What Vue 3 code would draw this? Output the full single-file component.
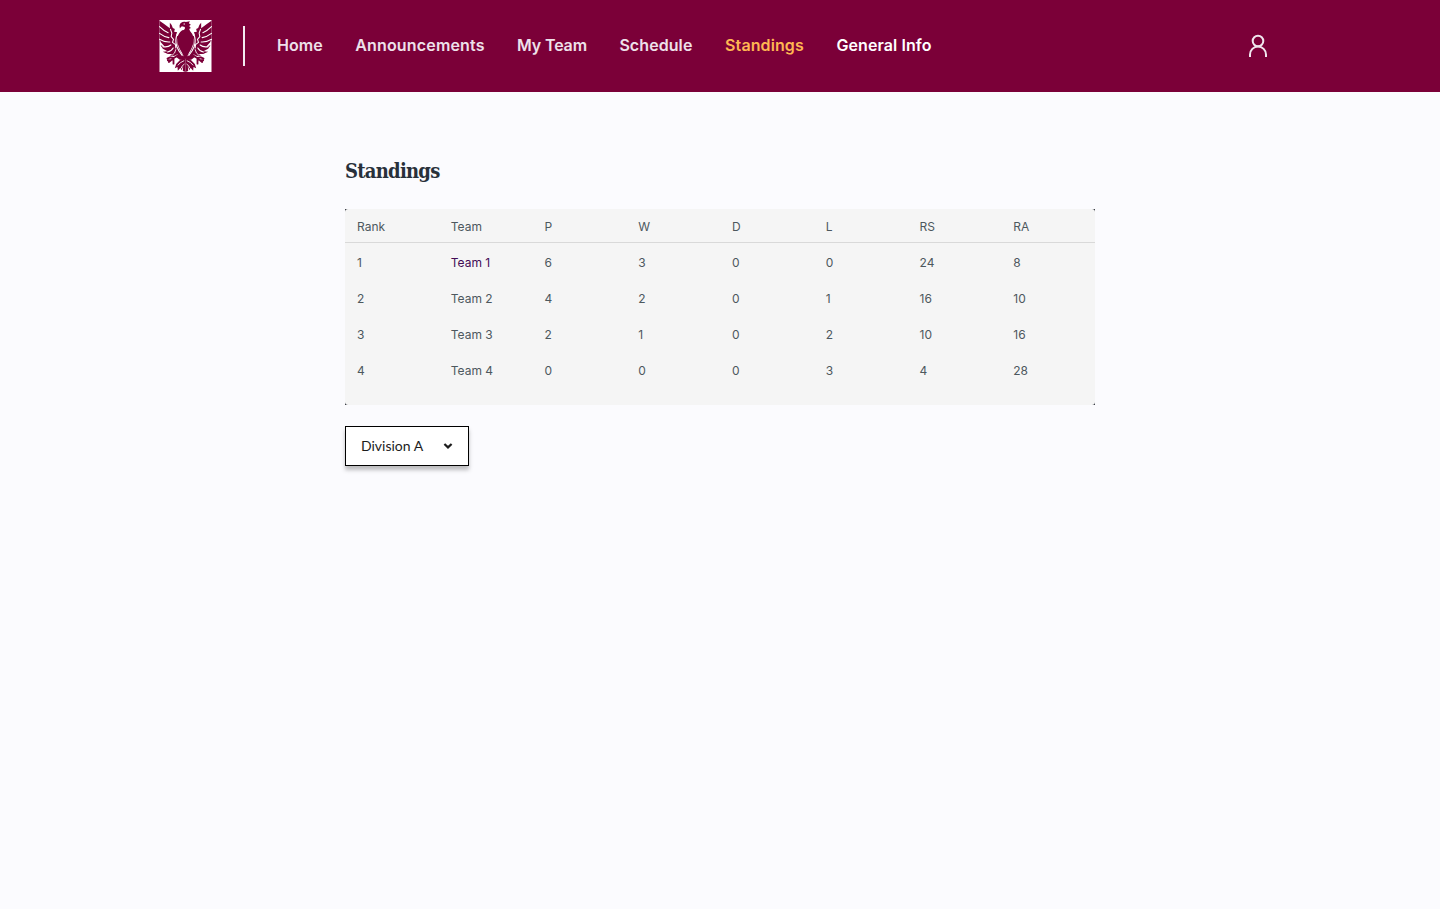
<script setup>
const links = [
  { label: 'Home', cls: 'home' },
  { label: 'Announcements', cls: 'news' },
  { label: 'My Team', cls: 'team' },
  { label: 'Schedule', cls: 'schedule' },
  { label: 'Standings', cls: 'active' },
  { label: 'General Info', cls: 'info' },
]
const columns = ['Rank', 'Team', 'P', 'W', 'D', 'L', 'RS', 'RA']
const rows = [
  [1, 'Team 1', 6, 3, 0, 0, 24, 8],
  [2, 'Team 2', 4, 2, 0, 1, 16, 10],
  [3, 'Team 3', 2, 1, 0, 2, 10, 16],
  [4, 'Team 4', 0, 0, 0, 3, 4, 28],
]
</script>

<template>
  <div class="page">
    <header class="bar">
      <svg class="logo" viewBox="0 0 156 156" aria-label="Eagle crest">
        <rect width="156" height="156" fill="#fff" />
        <defs>
          <g id="half">
            <path fill="#7b0038" d="M0 2 L14 12 L31 25 L31 8 L36 14 L40 24 L46 27 L44 35 L53 37 L50 46 L58 50 L54 58 L54 76 L64 98 L74 110 L76 120 L61 119 L49 110 L56 101 L46 107 L31 109 L38 102 L25 102 L10 95 L24 94 L10 86 L3 76 L16 80 L4 67 L0 56 Z" />
            <g fill="none" stroke="#fff" stroke-width="3.4" stroke-linecap="round">
              <path d="M0 20 Q13 33 26 38" />
              <path d="M0 40 Q13 50 28 53" />
              <path d="M0 58 Q14 67 31 66" />
              <path d="M10 80 Q25 83 34 75" />
              <path d="M24 96 Q36 94 41 84" />
              <path d="M37 107 Q48 100 49 89" stroke-width="2.6" />
              <path d="M33 28 L37 39 L35 50 L42 58 L39 67 L48 74 L49 84" stroke-width="3.2" />
              <path d="M54 40 Q45 62 52 80 Q57 94 68 106" stroke-width="3.4" />
            </g>
            <g fill="none" stroke="#7b0038" stroke-width="5.5" stroke-linecap="round" stroke-linejoin="round">
              <path d="M57 105 L43 114 L32 112 L24 116 M43 114 L28 126 M42 115 L42 131 M35 120 L25 121" />
            </g>
            <path fill="#7b0038" d="M78 113 L61 121 L50 132 L46 145 L54 141 L55 152 L63 143 L66 151 L71 139 L70 153 L78 156 Z" />
            <path fill="none" stroke="#fff" stroke-width="2.6" d="M74 122 Q61 127 55 136 M75 132 Q67 136 65 145" />
          </g>
        </defs>
        <use href="#half" />
        <use href="#half" transform="translate(156 0) scale(-1 1)" />
        <path fill="#7b0038" d="M68 31 C50 44 50 66 61 87 C66 97 72 103 74 116 L82 116 C84 103 90 97 95 87 C106 66 106 44 88 31 Z" />
        <path fill="#7b0038" d="M60 17 C62 7 70 4 79 6 L91 4 L88 10 L94 14 L89 18 L94 24 L89 27 L93 37 L64 37 L76 27 L76 21 L67 19 L61 25 Z" />
        <circle cx="74" cy="12" r="2" fill="#fff" />
      </svg>
      <span class="divider"></span>
      <nav class="nav">
        <a v-for="l in links" :key="l.label" :class="['link', l.cls]">{{ l.label }}</a>
      </nav>
      <svg class="user" viewBox="0 0 24 26" fill="none" stroke="#f0e6ee" stroke-width="2">
        <circle cx="12" cy="8" r="5.3" />
        <path d="M4 24 V21.5 a8 8 0 0 1 16 0 V24" />
      </svg>
    </header>
    <main class="main">
      <h1 class="title">Standings</h1>
      <div class="frame">
        <div class="table">
          <div class="row head">
            <span v-for="c in columns" :key="c">{{ c }}</span>
          </div>
          <div v-for="(r, i) in rows" :key="i" class="row">
            <span v-for="(v, j) in r" :key="j" :class="{ own: i === 0 && j === 1 }">{{ v }}</span>
          </div>
        </div>
      </div>
      <button class="select">
        <span>Division A</span>
        <svg class="chev" viewBox="0 0 10 8" fill="none" stroke="#1c1c1c" stroke-width="2.2"><path d="M1.4 2 L5 5.4 L8.6 2" /></svg>
      </button>
    </main>
  </div>
</template>

<style>
body { background: #fbfbfe; }
</style>

<style scoped>
.page { min-height: 909px; background: #fbfbfe; font-family: Inter, sans-serif; }
.bar { box-sizing: border-box; height: 92px; padding: 0 170px 0 159px; background: #7b0038; display: flex; align-items: center; }
.logo { width: 53px; height: 52px; flex: none; }
.divider { width: 2px; height: 40px; margin: 0 32px 0 31px; background: #f3eaf1; }
.nav { display: flex; gap: 32px; margin-right: auto; padding-bottom: 2px; }
.link { font: 600 16px/24px Inter, sans-serif; color: #eee1ea; white-space: nowrap; }
.home { width: 46.2px; letter-spacing: 0.05px; }
.news { width: 129.9px; letter-spacing: 0.17px; }
.team { width: 70.3px; letter-spacing: -0.15px; }
.schedule { width: 73.7px; letter-spacing: 0.08px; }
.active { width: 79.4px; letter-spacing: 0.1px; color: #ffb752; }
.info { width: 96px; letter-spacing: 0.08px; color: #fff; }
.user { width: 24px; height: 26px; }
.main { width: 750px; margin: 0 auto; padding-top: 65px; }
.title { margin: 0; font: 700 20px/28px "DejaVu Serif Condensed", "DejaVu Serif", serif; font-stretch: condensed; letter-spacing: -0.75px; color: #28303a; }
.frame { margin-top: 24px; background: #2c3038; }
.table { height: 196px; border-radius: 3px; background: #f5f5f5; }
.row { box-sizing: border-box; height: 36px; display: grid; grid-template-columns: repeat(8, 1fr); align-items: center; font-size: 12px; line-height: 16px; color: #4d585e; }
.row span { padding-left: 12px; }
.row.head { height: 34px; padding-top: 2px; margin-bottom: 2px; border-bottom: 1px solid #d9d9d9; }
.row .own { color: #420c55; }
.select { box-sizing: border-box; width: 124px; height: 40px; margin-top: 21px; padding: 0 15px; display: flex; align-items: center; justify-content: space-between; border: 1px solid #000; background: #fff; box-shadow: 0 4px 4px rgba(0, 0, 0, 0.25); font: 400 14px/20px Lato, sans-serif; color: #1c1c1c; }
.chev { width: 10px; height: 8px; }
</style>
